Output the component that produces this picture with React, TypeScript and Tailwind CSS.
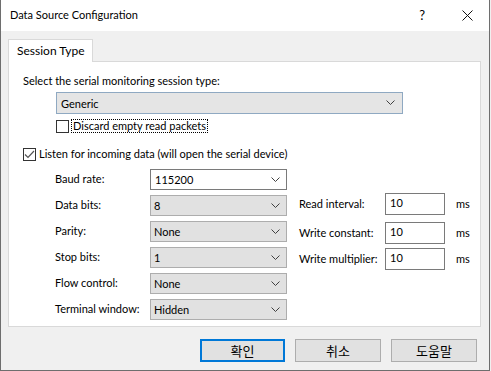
import React from 'react';

const Chevron = () => (
  <svg width="9" height="6" viewBox="0 0 9 6" className="shrink-0">
    <path d="M0.5 0.5 L4.5 4.5 L8.5 0.5" fill="none" stroke="#404040" strokeWidth="1" />
  </svg>
);

const Combo: React.FC<{ value: string; active?: boolean }> = ({ value, active }) => (
  <div
    className={
      active
        ? 'w-[137px] h-[21px] border border-[#7a7a7a] bg-white flex items-center pl-[4px] pr-[6px]'
        : 'w-[137px] h-[21px] border border-[#adadad] bg-[#e1e1e1] flex items-center pl-[3px] pr-[6px]'
    }
  >
    <span className="flex-1 leading-none">{value}</span>
    <Chevron />
  </div>
);

const Edit: React.FC<{ value: string }> = ({ value }) => (
  <div className="w-[60px] h-[22px] border border-[#7a7a7a] bg-white pl-[4px] pt-[1px] leading-[16px]">
    {value}
  </div>
);

export default function App() {
  const left = [
    { label: 'Baud rate:', value: '115200', active: true },
    { label: 'Data bits:', value: '8' },
    { label: 'Parity:', value: 'None' },
    { label: 'Stop bits:', value: '1' },
    { label: 'Flow control:', value: 'None' },
    { label: 'Terminal window:', value: 'Hidden' },
  ];

  return (
    <div className="w-[491px] h-[371px] bg-[#f0f0f0] font-['Lato',sans-serif] text-[11px] text-black whitespace-nowrap">
      <div className="w-[490px] h-[371px] border-l border-r border-b border-[#6e6e6e] flex flex-col">
        {/* title bar */}
        <div className="h-[31px] bg-white flex items-center pl-[9px] shrink-0">
          <span className="text-[11px]">Data Source Configuration</span>
          <span className="ml-auto mr-[37px] text-[13px]">?</span>
          <svg width="11" height="11" viewBox="0 0 11 11" className="mr-[16px]">
            <path d="M0.5 0.5 L10.5 10.5 M10.5 0.5 L0.5 10.5" stroke="#111" strokeWidth="1" />
          </svg>
        </div>

        {/* body */}
        <div className="flex-1 flex flex-col px-[7px] pt-[8px]">
          {/* tab strip */}
          <div className="flex h-[22px]">
            <div className="w-[85px] h-[23px] bg-white border border-b-0 border-[#d9d9d9] pl-[8px] pt-[3px] leading-[16px] text-[12px] relative z-10">
              Session Type
            </div>
          </div>

          {/* panel */}
          <div className="w-[473px] h-[266px] bg-white border border-[#d9d9d9] pl-[14px] pt-[11px]">
            <div className="leading-[16px]">Select the serial monitoring session type:</div>
            <div className="ml-[33px] mt-[3px] w-[347px] h-[22px] bg-[#e5e5e5] border border-[#8fa9c2] flex items-center pl-[4px] pr-[7px]">
              <span className="flex-1 leading-none">Generic</span>
              <Chevron />
            </div>
            <div className="ml-[33px] mt-[5px] flex items-center h-[14px]">
              <div className="w-[13px] h-[13px] border border-[#333] bg-white" />
              <span className="ml-[2px] px-[1px] border border-dotted border-black leading-[12px]">Discard empty read packets</span>
            </div>

            <div className="mt-[14px] flex items-center h-[14px]">
              <div className="w-[13px] h-[13px] border border-[#333] bg-white flex items-center justify-center">
                <svg width="11" height="9" viewBox="0 0 11 9">
                  <path d="M1 4.5 L4 7.5 L10 1" fill="none" stroke="#555" strokeWidth="1.2" />
                </svg>
              </div>
              <span className="ml-[3px] leading-[14px]">Listen for incoming data (will open the serial device)</span>
            </div>

            <div className="flex mt-[8px]">
              {/* left column */}
              <div className="ml-[32px] flex flex-col gap-[5px]">
                {left.map((r) => (
                  <div key={r.label} className="flex items-center h-[21px]">
                    <span className="w-[95px]">{r.label}</span>
                    <Combo value={r.value} active={r.active} />
                  </div>
                ))}
              </div>

              {/* right column */}
              <div className="ml-[12px] mt-[24px] flex flex-col">
                {[
                  { label: 'Read interval:', mt: 'mt-0' },
                  { label: 'Write constant:', mt: 'mt-[7px]' },
                  { label: 'Write multiplier:', mt: 'mt-[4px]' },
                ].map((r) => (
                  <div key={r.label} className={`flex items-center h-[22px] ${r.mt}`}>
                    <span className="w-[86px]">{r.label}</span>
                    <Edit value="10" />
                    <span className="ml-[11px]">ms</span>
                  </div>
                ))}
              </div>
            </div>
          </div>

          {/* buttons */}
          <div className="flex justify-end gap-[10px] mt-[12px] pr-[5px] text-[13px] font-['Noto_Sans_CJK_KR',sans-serif]">
            <div className="w-[85px] h-[23px] border-2 border-[#0078d7] bg-[#e1e1e1] flex items-center justify-center">확인</div>
            <div className="w-[86px] h-[23px] border border-[#adadad] bg-[#e1e1e1] flex items-center justify-center">취소</div>
            <div className="w-[86px] h-[23px] border border-[#adadad] bg-[#e1e1e1] flex items-center justify-center">도움말</div>
          </div>
        </div>
      </div>
    </div>
  );
}
